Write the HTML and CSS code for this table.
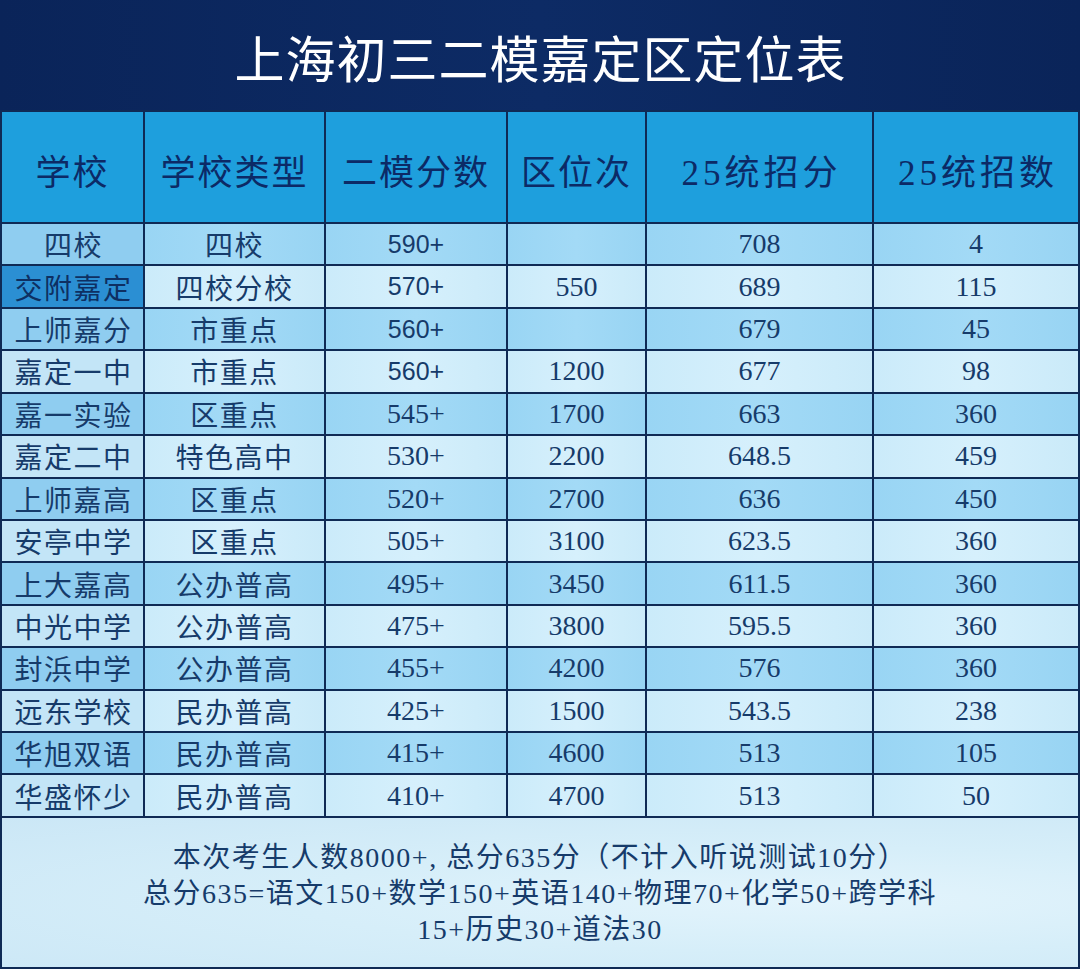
FILE: index.html
```html
<!DOCTYPE html>
<html lang="zh-CN">
<head>
<meta charset="utf-8">
<title>上海初三二模嘉定区定位表</title>
<link rel="stylesheet" href="styles.css">
</head>
<body>
<div class="sheet">
  <div class="title">上海初三二模嘉定区定位表</div>
  <div class="grid">
    <div class="row head">
      <div class="cell">学校</div>
      <div class="cell">学校类型</div>
      <div class="cell">二模分数</div>
      <div class="cell">区位次</div>
      <div class="cell wide">25统招分</div>
      <div class="cell wide">25统招数</div>
    </div>
    <div class="row mid">
      <div class="cell name">四校</div><div class="cell type">四校</div><div class="cell num sans">590+</div><div class="cell num"></div><div class="cell num">708</div><div class="cell num">4</div>
    </div>
    <div class="row light">
      <div class="cell name hl">交附嘉定</div><div class="cell type">四校分校</div><div class="cell num sans">570+</div><div class="cell num">550</div><div class="cell num">689</div><div class="cell num">115</div>
    </div>
    <div class="row mid">
      <div class="cell name">上师嘉分</div><div class="cell type">市重点</div><div class="cell num sans">560+</div><div class="cell num"></div><div class="cell num">679</div><div class="cell num">45</div>
    </div>
    <div class="row light">
      <div class="cell name">嘉定一中</div><div class="cell type">市重点</div><div class="cell num sans">560+</div><div class="cell num">1200</div><div class="cell num">677</div><div class="cell num">98</div>
    </div>
    <div class="row mid">
      <div class="cell name">嘉一实验</div><div class="cell type">区重点</div><div class="cell num">545+</div><div class="cell num">1700</div><div class="cell num">663</div><div class="cell num">360</div>
    </div>
    <div class="row light">
      <div class="cell name">嘉定二中</div><div class="cell type">特色高中</div><div class="cell num">530+</div><div class="cell num">2200</div><div class="cell num">648.5</div><div class="cell num">459</div>
    </div>
    <div class="row mid">
      <div class="cell name">上师嘉高</div><div class="cell type">区重点</div><div class="cell num">520+</div><div class="cell num">2700</div><div class="cell num">636</div><div class="cell num">450</div>
    </div>
    <div class="row light">
      <div class="cell name">安亭中学</div><div class="cell type">区重点</div><div class="cell num">505+</div><div class="cell num">3100</div><div class="cell num">623.5</div><div class="cell num">360</div>
    </div>
    <div class="row mid">
      <div class="cell name">上大嘉高</div><div class="cell type">公办普高</div><div class="cell num">495+</div><div class="cell num">3450</div><div class="cell num">611.5</div><div class="cell num">360</div>
    </div>
    <div class="row light">
      <div class="cell name">中光中学</div><div class="cell type">公办普高</div><div class="cell num">475+</div><div class="cell num">3800</div><div class="cell num">595.5</div><div class="cell num">360</div>
    </div>
    <div class="row mid">
      <div class="cell name">封浜中学</div><div class="cell type">公办普高</div><div class="cell num">455+</div><div class="cell num">4200</div><div class="cell num">576</div><div class="cell num">360</div>
    </div>
    <div class="row light">
      <div class="cell name">远东学校</div><div class="cell type">民办普高</div><div class="cell num">425+</div><div class="cell num">1500</div><div class="cell num">543.5</div><div class="cell num">238</div>
    </div>
    <div class="row mid">
      <div class="cell name">华旭双语</div><div class="cell type">民办普高</div><div class="cell num">415+</div><div class="cell num">4600</div><div class="cell num">513</div><div class="cell num">105</div>
    </div>
    <div class="row light">
      <div class="cell name">华盛怀少</div><div class="cell type">民办普高</div><div class="cell num">410+</div><div class="cell num">4700</div><div class="cell num">513</div><div class="cell num">50</div>
    </div>
    <div class="foot">
      <div class="line">本次考生人数8000+, 总分635分（不计入听说测试10分）</div>
      <div class="line">总分635=语文150+数学150+英语140+物理70+化学50+跨学科</div>
      <div class="line">15+历史30+道法30</div>
    </div>
  </div>
</div>
</body>
</html>
```

FILE: styles.css
```css
html, body {
  margin: 0;
  padding: 0;
  background: #0f2a55;
}

.sheet {
  width: 1080px;
  height: 969px;
  display: flex;
  flex-direction: column;
  font-family: "Liberation Serif", "Noto Sans CJK SC", serif;
  color: #163b6a;
}

.title {
  height: 110px;
  display: flex;
  align-items: center;
  justify-content: center;
  background: linear-gradient(90deg, #0a2459 0%, #0d2b65 50%, #0a2459 100%);
  color: #ffffff;
  font-family: "Noto Sans CJK SC", sans-serif;
  font-size: 50px;
  letter-spacing: 1px;
  padding-left: 1px;
  padding-top: 2px;
  box-sizing: border-box;
}

.grid {
  flex: 1;
  display: grid;
  grid-template-columns: 141px 179px 180px 137px 225px 1fr;
  grid-template-rows: 110px repeat(14, 40.43px) 1fr;
  gap: 2px;
  padding: 2px;
  background: #0f2a55;
}

.row {
  display: contents;
}

.cell {
  display: flex;
  align-items: center;
  justify-content: center;
  white-space: nowrap;
}

.head .cell {
  background: #1e9fdd;
  color: #0c2a66;
  font-size: 35px;
  letter-spacing: 2px;
  padding-top: 4px;
  box-sizing: border-box;
}

.head .cell.wide {
  letter-spacing: 4px;
  padding-left: 4px;
}

.row.mid .cell {
  background: linear-gradient(90deg, #99d5f4 0%, #a3daf6 50%, #98d4f3 100%);
}

.row.light .cell {
  background: linear-gradient(90deg, #cbebfa 0%, #d6f0fc 50%, #caeaf9 100%);
}

.row.mid .cell.name {
  background: #8fcdf0;
}

.row.light .cell.name {
  background: #c3e5f7;
}

.row .cell.name.hl {
  background: #2b8fd3;
  color: #0e2f62;
}

.name, .type {
  font-family: "Noto Sans CJK SC", sans-serif;
  font-size: 28px;
  letter-spacing: 1.5px;
}

.name {
  padding-left: 2px;
}

.num {
  font-size: 28px;
}

.num.sans {
  font-family: "Liberation Sans", "Noto Sans CJK SC", sans-serif;
  font-size: 25px;
}

.foot {
  grid-column: 1 / -1;
  display: flex;
  flex-direction: column;
  align-items: center;
  justify-content: center;
  padding-top: 4px;
  background: radial-gradient(ellipse at 75% 55%, #e3f4fc 0%, #d6eef9 45%, #cbe7f6 100%);
  font-size: 28px;
  letter-spacing: 1.5px;
  line-height: 36px;
  color: #163b6a;
}
```
